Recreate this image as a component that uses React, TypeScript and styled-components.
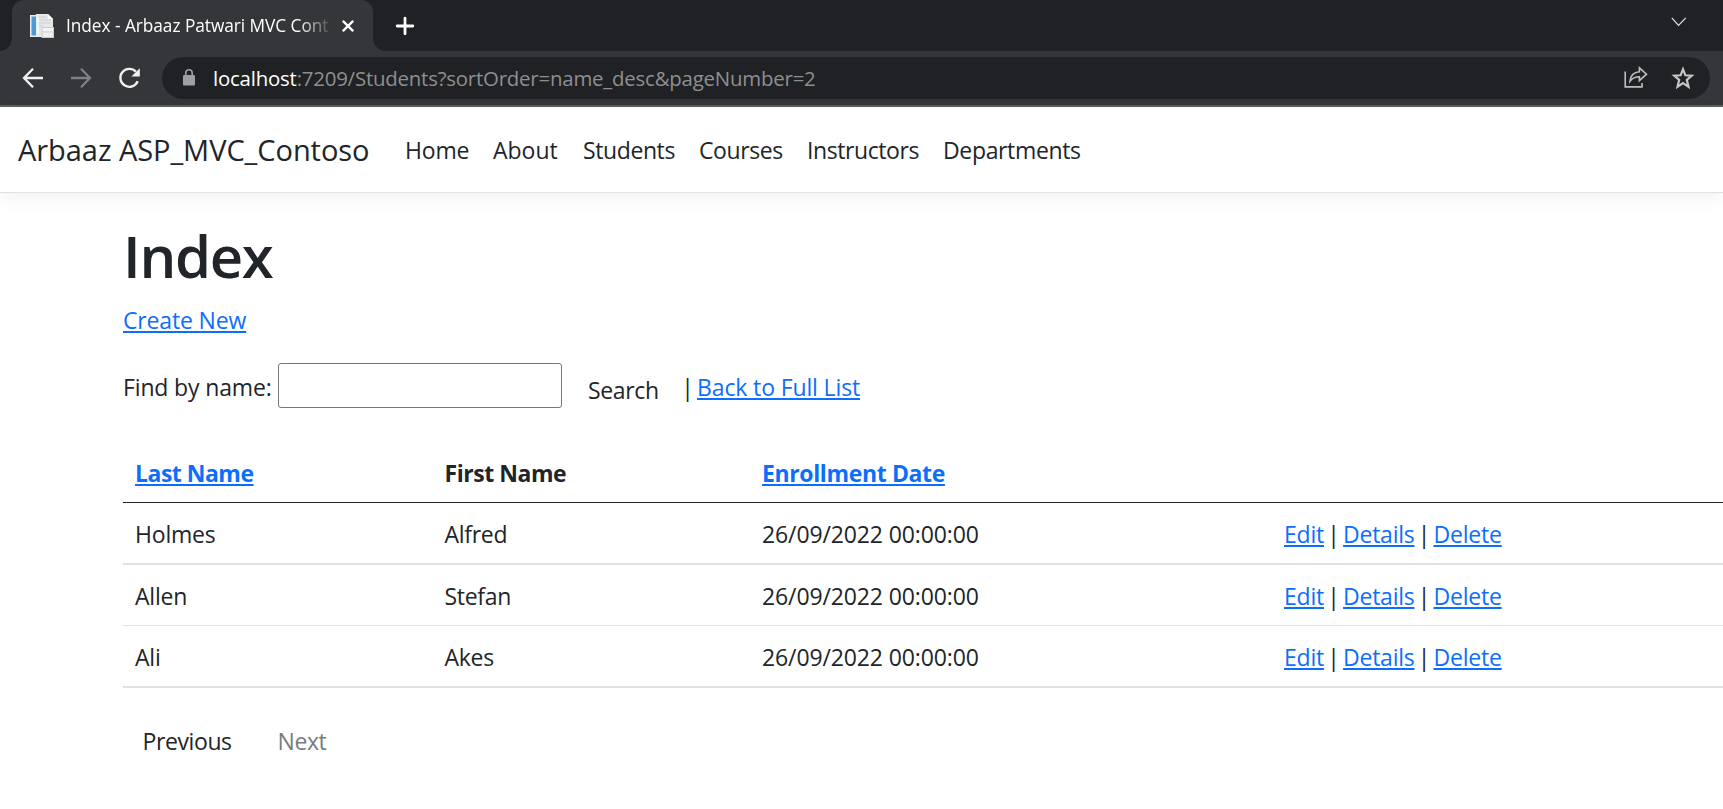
import React from "react";
import styled, { createGlobalStyle, css } from "styled-components";

const GlobalStyle = createGlobalStyle`
  *, *::before, *::after { box-sizing: border-box; }
  html, body { margin: 0; padding: 0; overflow: hidden; background: #fff; }
  body {
    font-family: "Open Sans", "Noto Sans", sans-serif;
    font-size: 23px;
    line-height: 36px;
    letter-spacing: -0.2px;
    color: #212529;
  }
`;

const Window = styled.div`
  display: flex;
  flex-direction: column;
  height: 809px;
  overflow: hidden;
`;

/* ---- browser chrome ---- */

const TabStrip = styled.div`
  display: flex;
  align-items: center;
  height: 51px;
  flex: none;
  padding: 0 36px 0 12px;
  background: #202124;
`;

const Tab = styled.div`
  position: relative;
  display: flex;
  align-items: center;
  width: 361px;
  height: 51px;
  padding: 0 19px 0 18px;
  border-radius: 12px 12px 0 0;
  background: #35363a;

  &::before,
  &::after {
    content: "";
    position: absolute;
    bottom: 0;
    width: 12px;
    height: 12px;
  }
  &::before {
    left: -12px;
    background: radial-gradient(circle at 0 0, transparent 11.5px, #35363a 12px);
  }
  &::after {
    right: -12px;
    background: radial-gradient(circle at 100% 0, transparent 11.5px, #35363a 12px);
  }
`;

const TabTitle = styled.span`
  width: 264px;
  margin: 0 12px 0 12px;
  white-space: nowrap;
  font-size: 17.3px;
  line-height: 24px;
  letter-spacing: -0.05px;
  color: #fff;
  mask-image: linear-gradient(to right, #000 232px, transparent 268px);
`;

const NewTab = styled.span`
  display: flex;
  margin-left: 22px;
`;

const StripEnd = styled.span`
  display: flex;
  margin: -8px 0 0 auto;
`;

const Toolbar = styled.div`
  display: flex;
  align-items: center;
  height: 56px;
  flex: none;
  padding: 0 13px 0 22px;
  border-bottom: 2px solid #5d5e62;
  background: #35363a;
`;

const ToolButtons = styled.div`
  display: flex;
  gap: 26px;
  width: 140px;
`;

const AddressBar = styled.div`
  display: flex;
  align-items: center;
  flex: 1;
  height: 42px;
  padding: 0 15px 0 20px;
  border-radius: 21px;
  background: #202124;
`;

const Url = styled.span`
  flex: 1;
  margin-left: 17px;
  font-size: 20.4px;
  line-height: 30px;
  letter-spacing: -0.2px;
  color: #8e8f91;

  b { font-weight: 400; color: #fff; }
`;

const AddressActions = styled.div`
  display: flex;
  gap: 23px;
`;

/* ---- site ---- */

const Navbar = styled.header`
  display: flex;
  align-items: center;
  height: 86px;
  flex: none;
  padding-left: 18px;
  border-bottom: 1px solid #dee2e6;
  box-shadow: 0 6px 18px rgba(0, 0, 0, 0.05);
`;

const Brand = styled.span`
  width: 375px;
  padding-top: 1px;
  font-size: 29px;
  letter-spacing: -0.05px;
  white-space: nowrap;
`;

const NavItem = styled.span<{ $width: number; $track: number }>`
  width: ${(p) => p.$width}px;
  padding: 1px 0 0 12px;
  letter-spacing: ${(p) => p.$track}px;
`;

const Main = styled.main`
  padding: 27px 0 0 123px;
`;

const Heading = styled.h1`
  margin: 0 0 10px;
  font-size: 58px;
  line-height: 72px;
  font-weight: 600;
  letter-spacing: -1.3px;
`;

const Link = styled.a<{ $track?: number }>`
  color: #0d6efd;
  text-decoration: underline 2px;
  text-underline-offset: 2px;
  text-decoration-skip-ink: none;
  ${(p) => p.$track !== undefined && css`letter-spacing: ${p.$track}px;`}
`;

const Divider = styled.span`
  display: inline-block;
  width: 19px;
  text-align: center;
`;

const SearchForm = styled.div`
  display: flex;
  align-items: flex-start;
  height: 80px;
  margin-top: 25px;
  white-space: pre;
`;

const Label = styled.label`
  width: 155px;
  padding-top: 6px;
  letter-spacing: -0.15px;
`;

const NameInput = styled.input`
  width: 284px;
  height: 45px;
  border: 1px solid #767676;
  border-radius: 3px;
  background: #fff;
`;

const SearchButton = styled.span`
  width: 116px;
  padding: 9px 0 0 26px;
  letter-spacing: -0.35px;
`;

const BackToList = styled.span`
  padding-top: 6px;
`;

const Row = styled.div<{ $head?: boolean; $line: number }>`
  display: grid;
  grid-template-columns: 309.5px 317.5px 522px 1fr;
  padding: ${(p) => (p.$head ? 12 : 13)}px 0 11px;
  border-bottom: ${(p) => p.$line}px solid ${(p) => (p.$head ? "#212529" : "#dee2e6")};
  ${(p) => p.$head && css`font-weight: 700; letter-spacing: -0.45px;`}
`;

const Cell = styled.div<{ $track?: number }>`
  padding-left: 12px;
  white-space: pre;
  ${(p) => p.$track !== undefined && css`letter-spacing: ${p.$track}px;`}
`;

const Pager = styled.div`
  display: flex;
  margin-top: 35px;
`;

const PageButton = styled.span<{ $disabled?: boolean }>`
  width: 135px;
  padding-left: 19.5px;
  letter-spacing: -0.4px;
  color: ${(p) => (p.$disabled ? "#797c7f" : "#212529")};
`;

/* ---- icons ---- */

const Favicon = () => (
  <svg width="24" height="24" viewBox="0 0 24 24">
    <rect x="0" y="1" width="16" height="22" fill="#e8edf2" />
    <rect x="1.5" y="2.5" width="4.5" height="19" fill="#4b9bd6" />
    <path d="M5.5 0H18L23 5V21H7V2Z" fill="#e7e7e8" />
    <path d="M18 0V5H23Z" fill="#fff" />
    <path d="M8 3H16M8 6H21M8 9H21M8 12H13" stroke="#cbd0d5" strokeWidth="1" />
    <path d="M8 3V20" stroke="#fff" strokeWidth="1.2" />
    <rect x="11.5" y="13" width="12.5" height="11" fill="#c8cbd0" />
    <rect x="12.5" y="14" width="10.5" height="3.4" fill="#f4f4f5" />
    <rect x="12.5" y="18.3" width="10.5" height="4.7" fill="#eceded" />
  </svg>
);

const CloseIcon = () => (
  <svg width="12" height="12" viewBox="0 0 12 12" fill="none" stroke="#fff" strokeWidth="2.3">
    <path d="M0.8 0.8L11.2 11.2M11.2 0.8L0.8 11.2" />
  </svg>
);

const PlusIcon = () => (
  <svg width="20" height="20" viewBox="0 0 20 20" fill="none" stroke="#fff" strokeWidth="2.8" strokeLinecap="round">
    <path d="M10 2.2V17.8M2.2 10H17.8" />
  </svg>
);

const ChevronIcon = () => (
  <svg width="16" height="10" viewBox="0 0 16 10" fill="none" stroke="#e3e3e4" strokeWidth="1.2">
    <path d="M0.8 0.8L7.5 8.3L14.8 0.8" />
  </svg>
);

const ArrowIcon = ({ color, forward }: { color: string; forward?: boolean }) => (
  <svg width="22" height="22" viewBox="0 0 22 22" fill="none" stroke={color} strokeWidth="2.3">
    <path d={forward ? "M1 11H20M11 1.8L20 11L11 20.2" : "M21 11H2M11 1.8L2 11L11 20.2"} />
  </svg>
);

const ReloadIcon = () => (
  <svg width="22" height="22" viewBox="0 0 22 22">
    <path d="M17.9 4.6A9 9 0 1 0 19.7 14.2" fill="none" stroke="#f1f1f2" strokeWidth="2.3" />
    <path d="M21.8 1.2V9.6H13.4Z" fill="#f1f1f2" />
  </svg>
);

const LockIcon = () => (
  <svg width="14" height="18" viewBox="0 0 14 18">
    <rect x="1" y="6" width="12" height="10.6" rx="1.3" fill="#9aa0a6" />
    <path d="M3.8 7V4A3.2 3.2 0 0 1 10.2 4V7" fill="none" stroke="#9aa0a6" strokeWidth="1.6" />
  </svg>
);

const ShareIcon = () => (
  <svg width="24" height="22" viewBox="0 0 24 22" fill="none" stroke="#bdbebf" strokeWidth="1.6">
    <path d="M1.2 5.5V20.9H18V17" />
    <path d="M6 15.3C6.5 9.5 9.7 6.1 15.4 5.7V1.8L22.5 8.2L15.4 14.6V10.8C11 10.8 8.3 12.2 6 15.3Z" />
  </svg>
);

const StarIcon = () => (
  <svg width="24" height="24" viewBox="0 0 24 24" fill="none" stroke="#c6c7c8" strokeWidth="2.2">
    <path d="M12 3.3L14.4 9.3L20.7 9.7L15.8 13.8L17.5 20.8L12 17.1L6.5 20.8L8.2 13.8L3.3 9.7L9.6 9.3Z" />
  </svg>
);

/* ---- data ---- */

const navItems = [
  { name: "Home", width: 88, track: -0.2 },
  { name: "About", width: 90, track: 0 },
  { name: "Students", width: 116, track: -0.4 },
  { name: "Courses", width: 108, track: -0.4 },
  { name: "Instructors", width: 136, track: -0.42 },
  { name: "Departments", width: 160, track: -0.35 },
];

const students = [
  { last: "Holmes", first: "Alfred", line: 2 },
  { last: "Allen", first: "Stefan", line: 1 },
  { last: "Ali", first: "Akes", line: 2 },
];

export default function App() {
  return (
    <Window>
      <GlobalStyle />
      <TabStrip>
        <Tab>
          <Favicon />
          <TabTitle>Index - Arbaaz Patwari MVC Cont</TabTitle>
          <CloseIcon />
        </Tab>
        <NewTab><PlusIcon /></NewTab>
        <StripEnd><ChevronIcon /></StripEnd>
      </TabStrip>
      <Toolbar>
        <ToolButtons>
          <ArrowIcon color="#f1f1f2" />
          <ArrowIcon color="#808184" forward />
          <ReloadIcon />
        </ToolButtons>
        <AddressBar>
          <LockIcon />
          <Url><b>localhost</b>:7209/Students?sortOrder=name_desc&amp;pageNumber=2</Url>
          <AddressActions>
            <ShareIcon />
            <StarIcon />
          </AddressActions>
        </AddressBar>
      </Toolbar>

      <Navbar>
        <Brand>Arbaaz ASP_MVC_Contoso</Brand>
        {navItems.map((item) => (
          <NavItem key={item.name} $width={item.width} $track={item.track}>{item.name}</NavItem>
        ))}
      </Navbar>

      <Main>
        <Heading>Index</Heading>
        <Link $track={-0.15}>Create New</Link>
        <SearchForm>
          <Label>Find by name:</Label>
          <NameInput />
          <SearchButton>Search</SearchButton>
          <BackToList>
            <Divider>|</Divider>
            <Link $track={-0.13}>Back to Full List</Link>
          </BackToList>
        </SearchForm>

        <Row $head $line={1}>
          <Cell><Link $track={-0.5}>Last Name</Link></Cell>
          <Cell>First Name</Cell>
          <Cell><Link $track={-0.37}>Enrollment Date</Link></Cell>
          <Cell />
        </Row>
        {students.map((s) => (
          <Row key={s.last} $line={s.line}>
            <Cell>{s.last}</Cell>
            <Cell $track={-0.3}>{s.first}</Cell>
            <Cell $track={-0.12}>26/09/2022 00:00:00</Cell>
            <Cell>
              <Link>Edit</Link>
              <Divider>|</Divider>
              <Link $track={-0.25}>Details</Link>
              <Divider>|</Divider>
              <Link>Delete</Link>
            </Cell>
          </Row>
        ))}

        <Pager>
          <PageButton>Previous</PageButton>
          <PageButton $disabled>Next</PageButton>
        </Pager>
      </Main>
    </Window>
  );
}
